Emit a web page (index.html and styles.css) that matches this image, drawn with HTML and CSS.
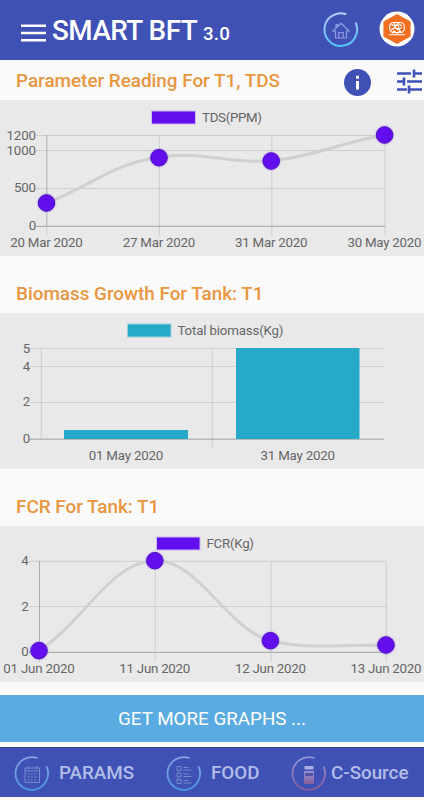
FILE: index.html
```html
<!DOCTYPE html>
<html lang="en">
<head>
<meta charset="utf-8">
<meta name="viewport" content="width=device-width, initial-scale=1">
<title>SMART BFT</title>
<link rel="stylesheet" href="styles.css">
</head>
<body>
<header class="topbar">
  <svg class="menu" viewBox="0 0 25 18"><path d="M0 1.7h25M0 9h25M0 16.3h25"/></svg>
  <h1 class="brand">SMART BFT <small>3.0</small></h1>
  <svg class="home" viewBox="0 0 36 36">
    <defs><linearGradient id="ring" x1="0" y1="0" x2="0" y2="1"><stop offset="0" stop-color="#b9c8f5"/><stop offset="1" stop-color="#4fc3f7"/></linearGradient></defs>
    <path d="M23.300 2.200A16.300 16.300 0 1 0 32.500 10.500" fill="none" stroke="url(#ring)" stroke-width="2"/>
    <g fill="none" stroke="#8e9be0" stroke-width="1.200"><path d="M10 19l8-7.800 8 7.800h-2.500v7h-11v-7zM15.800 26v-5.500h4.400V26M13 16v-3.500h1.500v2"/></g>
  </svg>
  <svg class="avatar" viewBox="0 0 36 36">
    <circle cx="18" cy="18" r="17.500" fill="#fff"/>
    <path d="M18 3l13.600 7.500v15L18 33 4.400 25.500v-15z" fill="#f26f21"/>
    <g fill="none" stroke="#fff" stroke-width="1.100"><rect x="10.700" y="11.500" width="14.600" height="10" rx="4"/><path d="M12 13l4 2 3-2.500 4 2.500M12 19l4-2.500 3 2 4-2M15.500 12v3M20.500 17v4M13 22l2-2 3 2.500 3-2.500 2 2M10 23.800h16"/><circle cx="18" cy="16" r="1.800"/></g>
  </svg>
</header>
<main>
  <section>
    <div class="heading">
      <h2>Parameter Reading For T1, TDS</h2>
      <svg class="info" viewBox="0 0 27 27"><circle cx="13.500" cy="13.500" r="13.500"/><path d="M12 6.800h3v3h-3zM12 12h3v8.500h-3z" fill="#fff"/></svg>
      <svg class="tune" viewBox="0 0 25 25"><path d="M0 4.500h14M17 4.500h8M17 .5v8M0 12.500h7M7 8.500v8M10 12.500h15M0 20.500h10M12 16.500v8M12 20.500h13"/></svg>
    </div>
    <svg class="chart" viewBox="0 100 424 156">
      <g class="grid"><path d="M36 135.500h349M36 150.500h349M36 188.500h349M159.300 135v101M271.800 135v101M385 135v101"/><path class="dark" d="M46.800 135v91"/><path d="M46.800 226v10"/><path class="axis" d="M36 226.300h349"/></g>
      <path class="curve" d="M46.500 203C92 186 113 163 159 157.500C204 150 226 164 271 161C316 156 340 143 384.500 135"/>
      <g class="dots"><circle cx="46.500" cy="203" r="8.300"/><circle cx="159" cy="157.700" r="8.300"/><circle cx="271.200" cy="161" r="8.300"/><circle cx="384.600" cy="135" r="8.300"/></g>
      <rect class="key" x="151.500" y="111" width="44" height="13"/>
      <text x="202" y="122" textLength="60">TDS(PPM)</text>
      <g class="ticks"><text x="36" y="139.500">1200</text><text x="36" y="154.500">1000</text><text x="36" y="192">500</text><text x="36" y="230">0</text></g>
      <text x="10.300" y="247.300" textLength="72.500">20 Mar 2020</text><text x="122.800" y="247.300" textLength="72.500">27 Mar 2020</text><text x="235" y="247.300" textLength="72.500">31 Mar 2020</text><text x="347.500" y="247.300" textLength="74">30 May 2020</text>
    </svg>
  </section>
  <section>
    <div class="heading spaced"><h2>Biomass Growth For Tank: T1</h2></div>
    <svg class="chart" viewBox="0 313 424 156">
      <g class="grid"><path d="M30 348.500h354M30 366.500h354M30 402.500h354M41.300 348v91M212.300 348v101"/><path class="axis" d="M30 439.200h354"/></g>
      <path class="bars" d="M64 430h124v9H64zM236 348h123.500v91H236z"/>
      <rect class="key teal" x="127.500" y="324" width="43.500" height="13"/>
      <text x="177.500" y="335" textLength="106">Total biomass(Kg)</text>
      <g class="ticks"><text x="30" y="352.500">5</text><text x="30" y="370.500">4</text><text x="30" y="406.300">2</text><text x="30" y="443">0</text></g>
      <text x="88.700" y="460.300" textLength="74.500">01 May 2020</text><text x="260.500" y="460.300" textLength="74.500">31 May 2020</text>
    </svg>
  </section>
  <section>
    <div class="heading spaced"><h2>FCR For Tank: T1</h2></div>
    <svg class="chart" viewBox="0 526 424 156">
      <g class="grid"><path d="M29 561.300h357M29 606.500h357M155.200 561v101M271 561v101M386.300 561v101"/><path class="dark" d="M39.500 561v91"/><path d="M39.500 652v10"/><path class="axis" d="M29 652.300h357"/></g>
      <path class="curve" d="M39 650.500C85 621 110 562 155 560.500C199 560 226 628 270.500 641C306 649 340 645 386 645"/>
      <rect class="key" x="156.500" y="537" width="43.500" height="13"/>
      <g class="dots"><circle cx="39" cy="650.600" r="8.300"/><circle cx="154.800" cy="560.700" r="8.300"/><circle cx="270.400" cy="640.700" r="8.300"/><circle cx="386" cy="645" r="8.300"/></g>
      <text x="206.500" y="547.800" textLength="47.500">FCR(Kg)</text>
      <g class="ticks"><text x="28.500" y="565.300">4</text><text x="28.500" y="610.500">2</text><text x="28.500" y="656">0</text></g>
      <text x="3.300" y="673.300" textLength="71.500">01 Jun 2020</text><text x="119.300" y="673.300" textLength="71">11 Jun 2020</text><text x="235" y="673.300" textLength="71">12 Jun 2020</text><text x="350.500" y="673.300" textLength="71">13 Jun 2020</text>
    </svg>
  </section>
  <button class="more" type="button">GET MORE GRAPHS ...</button>
</main>
<nav class="bottom">
  <a class="tab params">
    <svg viewBox="0 0 36 36"><path class="ring" d="M23.300 2.200A16.300 16.300 0 1 0 32.500 10.500"/><path class="glyph" d="M11 12h14.500v14.500H11zM11 15h14.500M14 10v3M22.500 10v3"/><path class="glyph dashed" d="M13.500 18h10M13.500 21h10M13.500 24h10"/></svg>
    <span>PARAMS</span>
  </a>
  <a class="tab food">
    <svg viewBox="0 0 36 36"><path class="ring" d="M23.300 2.200A16.300 16.300 0 1 0 32.500 10.500"/><path class="glyph" d="M11 10.500h4v4h-4zM11 17h4v4h-4zM11 23.500h4v4h-4zM17.500 11.500h5M17.500 14h8M17.500 18h5M17.500 20.500h8M17.500 24.500h5M17.500 27h8"/></svg>
    <span>FOOD</span>
  </a>
  <a class="tab source">
    <svg viewBox="0 0 36 36"><defs><linearGradient id="rust" x1="0" y1="0" x2="0" y2="1"><stop offset="0" stop-color="#8e96d8"/><stop offset="1" stop-color="#8d5c9a"/></linearGradient></defs><path class="ring rust" d="M23.300 2.200A16.300 16.300 0 1 0 32.500 10.500"/><path d="M13.500 10h9v3.500h-9z" fill="#a9afe0"/><path d="M13 15h10v11.500q0 1.500-1.500 1.500h-7q-1.500 0-1.500-1.500z" fill="url(#rust)"/><path d="M14 17h8v3h-8z" fill="#5350a5"/></svg>
    <span>C-Source</span>
  </a>
</nav>
</body>
</html>
```
FILE: styles.css
```css
* { box-sizing: border-box; }
body { margin: 0; width: 424px; height: 800px; overflow: hidden; background: #fafafa; font-family: Roboto, sans-serif; }
svg { display: block; flex: none; }
h1, h2 { margin: 0; font-weight: 500; white-space: nowrap; }

.topbar { display: flex; align-items: center; height: 60px; padding-left: 21px; background: #3f51b5; color: #fff; }
.menu { width: 25px; height: 18px; margin-top: 6px; stroke: #fff; stroke-width: 2.4; }
.brand { width: 270px; margin: 4px 0 0 6px; font-size: 27.8px; line-height: 40px; letter-spacing: -.5px; }
.brand small { font-size: 18.7px; letter-spacing: .2px; }
.home { width: 36px; height: 36px; margin-left: 1px; }
.avatar { width: 36px; height: 36px; margin: -3px 0 0 20px; }

.heading { display: flex; align-items: center; height: 40px; padding-left: 16px; }
.heading h2 { width: 328px; padding-top: 1px; font-size: 18.9px; line-height: 40px; letter-spacing: -.02px; color: #e8963f; }
.spaced { height: 57px; padding-top: 17px; }
.info { width: 27px; height: 27px; margin-top: 4px; fill: #3f51b5; }
.tune { width: 25px; height: 25px; margin: 3px 0 0 26px; fill: none; stroke: #3f51b5; stroke-width: 2.6; }

.chart { width: 424px; height: 156px; background: #e9e9e9; }
.chart text { font-size: 13.3px; fill: #666; }
.chart .ticks text { text-anchor: end; letter-spacing: -.1px; }
.grid { fill: none; stroke: #cecece; stroke-width: 1; }
.grid .dark { stroke: #ababab; }
.grid .axis { stroke: #a3a3a3; }
.curve { fill: none; stroke: #d0d0d0; stroke-width: 3; }
.dots { fill: #630eee; stroke: #4b13bd; stroke-width: 1; filter: drop-shadow(0 0 1px #b18cf0); }
.key { fill: #630eee; stroke: #cbb9ec; stroke-width: 1; }
.teal { stroke: #9ed0dc; }
.bars, .teal { fill: #27a9c8; }

.more { display: block; width: 424px; height: 47px; margin: 13px 0 5px; padding: 1px 0 0; border: 0; background: #5aabe1; color: #fff; font: 400 18.8px/46px Roboto, sans-serif; }
.bottom { display: flex; align-items: center; height: 50px; padding-left: 14px; background: #3f51b5; border-top: 1px solid #303d8b; color: #b3bce9; }
.tab { display: flex; align-items: center; font-size: 18.8px; font-weight: 500; }
.tab svg { width: 36px; height: 36px; margin-top: 2px; }
.tab span { margin-left: 9px; }
.params { width: 152px; }
.food { width: 125px; }
.source span { margin-left: 4px; }
.ring { fill: none; stroke: url(#ring); stroke-width: 1.8; opacity: .65; }
.ring.rust { stroke: url(#rust); opacity: 1; }
.glyph { fill: none; stroke: #7d89d0; stroke-width: 1; }
.dashed { stroke-dasharray: 2 1.2; }
```
